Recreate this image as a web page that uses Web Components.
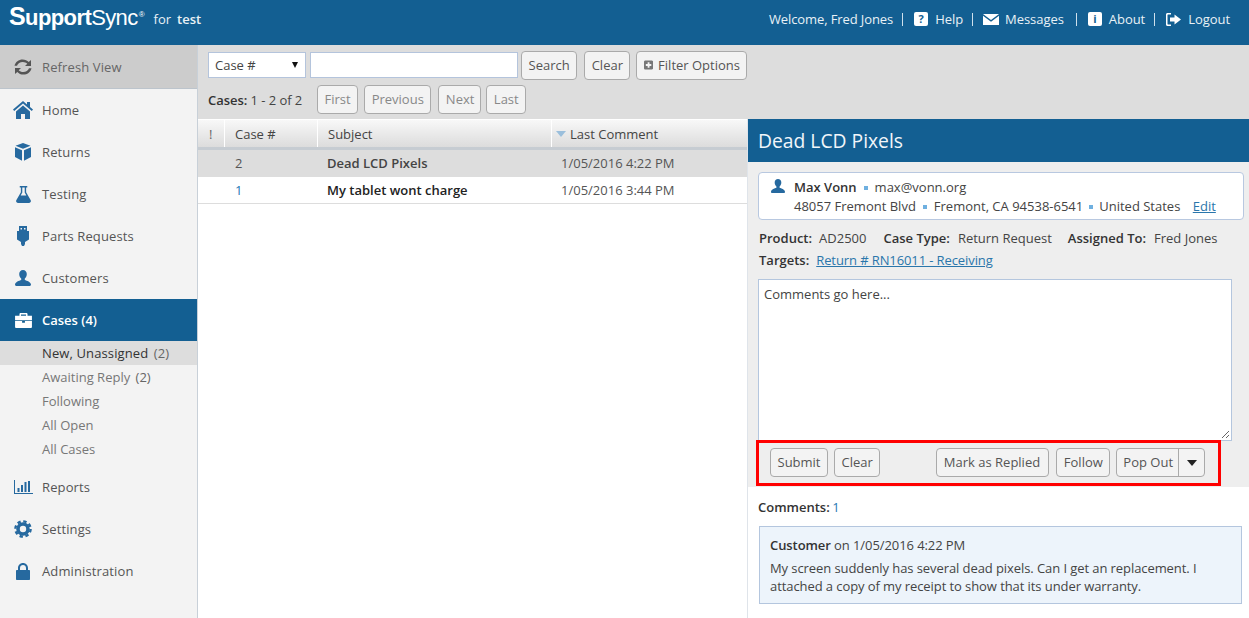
<!DOCTYPE html>
<html><head><meta charset="utf-8"><title>SupportSync</title>
<style>
html,body{margin:0;height:100%;overflow:hidden;background:#fff}
body{font:13px/18px "Open Sans",sans-serif;color:#444}
</style></head><body>
<app-shell>
  <app-header slot="top"></app-header>
  <side-nav slot="side"></side-nav>
  <case-filters slot="tools"></case-filters>
  <case-table slot="list"></case-table>
  <case-detail slot="detail"></case-detail>
</app-shell>
<script>
const I={
refresh:'<svg viewBox="0 0 20 20" width="20" height="20"><path fill="#555" d="M1.500 8.800C2.400 4.700 5.800 2.400 9.600 2.400c2.500 0 4.600 1 6.100 2.600L18 3v6h-6l2.300-2.300c-1.100-1.100-2.700-1.800-4.500-1.800-2.800 0-5 1.600-5.800 3.900zM18.500 11.200c-.9 4.100-4.300 6.400-8.100 6.400-2.500 0-4.600-1-6.100-2.600L2 17v-6h6l-2.300 2.300c1.100 1.100 2.700 1.800 4.500 1.800 2.800 0 5-1.600 5.800-3.900z"/></svg>',
home:'<svg viewBox="0 0 20 18" width="20" height="18"><path fill="#26699f" d="M10 0 0 8.600l1.200 1.400L10 2.500l8.800 7.500L20 8.600l-3-2.600V1h-3v2.400zM3 10.500V18h5v-5h4v5h5v-7.500L10 4.500z"/></svg>',
box:'<svg viewBox="0 0 18 18" width="18" height="18"><path fill="#26699f" d="M9 0 1.500 2.800 9 5.800l7.500-3zM1 4.300V14l7 3.700V7.200zM17 4.300l-7 2.900v10.500l7-3.700z"/></svg>',
flask:'<svg viewBox="0 0 16 18" width="15" height="17"><path fill="#26699f" d="M4 0h8v1.500h-1.200v5L15.700 15c.6 1.300-.1 3-1.900 3H2.200C.4 18-.3 16.300.3 15L5.200 6.500v-5H4zM6.700 1.500v5.400L5 10h6L9.300 6.900V1.500z"/></svg>',
plug:'<svg viewBox="0 0 12 20" width="12" height="20"><path fill="#26699f" d="M2 0h8v5h2v8.500L8 16v2l-1 2H5l-1-2v-2l-4-2.500V5h2zM3.500 2v1.500H5V2zM7 2v1.500h1.500V2z"/></svg>',
user:'<svg viewBox="0 0 16 16" width="16" height="16"><path fill="#26699f" d="M8 0c2.300 0 3.800 1.700 3.800 4 0 1.900-.9 3.700-2 4.600v1.300c1.900.7 6.200 1.900 6.200 4.700 0 .9-.5 1.400-1.200 1.400H1.200C.5 16 0 15.500 0 14.600c0-2.800 4.300-4 6.200-4.700V8.600c-1.100-.9-2-2.700-2-4.600C4.200 1.700 5.700 0 8 0z"/></svg>',
brief:'<svg viewBox="0 0 18 16" width="17" height="15"><path fill="#fff" d="M6 0h6c.8 0 1.300.5 1.300 1.300V3H18v4.600H0V3h4.700V1.300C4.700.5 5.200 0 6 0zm.3 1.500V3h5.400V1.500zM0 8.600h7.500V10.500h3V8.600H18V15c0 .6-.4 1-1 1H1c-.6 0-1-.4-1-1z"/></svg>',
chart:'<svg viewBox="0 0 19 14" width="19" height="14"><path fill="#26699f" d="M0 0h1v13h18v1H0zM3.500 8h2v4h-2zM7 5h2v7H7zM10.500 2h2v10h-2zM14 1h2v11h-2z"/></svg>',
cog:'<svg viewBox="0 0 18 18" width="18" height="18"><circle cx="9" cy="9" r="5" fill="none" stroke="#26699f" stroke-width="3.600"/><circle cx="9" cy="9" r="7.600" fill="none" stroke="#26699f" stroke-width="2.400" stroke-dasharray="3.400 2.570"/></svg>',
lock:'<svg viewBox="0 0 14 17" width="14" height="17"><path fill="#26699f" d="M7 0c2.800 0 5 2.200 5 5v2h1c.6 0 1 .4 1 1v8c0 .6-.4 1-1 1H1c-.6 0-1-.4-1-1V8c0-.6.4-1 1-1h1V5c0-2.800 2.200-5 5-5zm0 2C5.300 2 4 3.300 4 5v2h6V5c0-1.700-1.300-3-3-3z"/></svg>',
envelope:'<svg viewBox="0 0 16 11" width="16" height="11"><path fill="#fff" d="M0 0h16L8 6zM0 1.800 8 7.800l8-6V11H0z"/></svg>',
signout:'<svg viewBox="0 0 15 13" width="15" height="13"><path fill="#fff" d="M1.500 0H5v1.500H2c-.3 0-.5.2-.5.500v9c0 .3.200.5.500.5h3V13H1.500C.7 13 0 12.300 0 11.500v-10C0 .7.700 0 1.500 0zM8.500 1.500l6.500 5-6.500 5V8.500H4v-4h4.500z"/></svg>',
plus:'<svg viewBox="0 0 10 10" width="10" height="10"><path fill="#777" fill-rule="evenodd" d="M1.500 0h7C9.300 0 10 .7 10 1.500v7c0 .8-.7 1.500-1.500 1.500h-7C.7 10 0 9.300 0 8.500v-7C0 .7.7 0 1.500 0zM4 2v2H2v2h2v2h2V6h2V4H6V2z"/></svg>'
};
function def(name,css,html){
  customElements.define(name,class extends HTMLElement{
    connectedCallback(){
      if(this.shadowRoot)return;
      const r=this.attachShadow({mode:'open'});
      const t=document.createElement('template');
      t.innerHTML='<style>'+css+'</style>'+(typeof html==='function'?html(this):html);
      r.appendChild(t.content.cloneNode(true));
    }
  });
}
def('app-shell',`:host{display:grid;grid-template-columns:198px 549px 1fr;grid-template-rows:45px 74px 499px;width:1249px;height:618px;overflow:hidden}
 ::slotted(*){min-width:0}`,
 `<slot name="top"></slot><slot name="side"></slot><slot name="tools"></slot><slot name="list"></slot><slot name="detail"></slot>`);

def('app-header',`:host{display:flex;grid-column:1/4;align-items:center;background:#135f92;color:#e9f1f6;height:45px;padding:0 19px 7px 9px;box-sizing:border-box;line-height:18px}
 .logo{display:flex;align-items:baseline;color:#fff;font-family:"Liberation Sans",sans-serif;font-size:22px;letter-spacing:-.6px;margin-top:-5px}
 .logo b.s{font-size:25px}.logo b{font-weight:700}.logo i{font-style:normal}
 sup{font-size:8px;align-self:flex-start;line-height:10px;margin:3px 0 0 1px;letter-spacing:0}
 .for{margin-left:9px;display:flex;gap:6px}.for b{font-weight:600}
 .r{margin-left:auto;display:flex;align-items:center;letter-spacing:-.05px}
 .sep{width:1px;height:13px;background:#cfe0ec}
 .ic{width:14px;height:14px;background:#fff;color:#135f92;border-radius:2px;font:700 11px/14px "Open Sans",sans-serif;text-align:center;display:block}
 svg{display:block}`,
 `<div class="logo"><b class="s">S</b><b>upport</b><i>Sync</i><sup>®</sup></div>
 <div class="for"><span>for</span><b>test</b></div>
 <div class="r"><span style="letter-spacing:-.1px">Welcome, Fred Jones</span><span class="sep" style="margin:0 11px 0 9px"></span>
 <span class="ic">?</span><span style="margin:0 9px 0 7px">Help</span><span class="sep" style="margin-right:10px"></span>
 ${I.envelope}<span style="margin:0 12px 0 6px">Messages</span><span class="sep" style="margin-right:11px"></span>
 <span class="ic">i</span><span style="margin:0 9px 0 7px">About</span><span class="sep" style="margin-right:11px"></span>
 ${I.signout}<span style="margin-left:7px">Logout</span></div>`);

def('nav-item',`:host{display:flex;align-items:center;height:42px;color:#555;font-weight:500;font-size:13px;letter-spacing:.12px;box-sizing:border-box}
 :host([active]){background:#135f92;color:#fff;font-weight:600;letter-spacing:0}
 :host([refresh]){background:#ccc;height:44px;border-bottom:1px solid #bcc4cc;color:#666}
 .i{width:20px;margin-left:13px;margin-right:9px;display:flex;justify-content:center;align-items:center}
 svg{display:block}`,
 el=>`<span class="i">${I[el.getAttribute('icon')]}</span><slot></slot>`);

def('sub-item',`:host{display:block;height:24px;line-height:24px;padding-left:42px;color:#777;font-size:13px}
 :host([active]){background:#ddd;color:#333;font-weight:500;letter-spacing:.12px}
 ::slotted(span){font-weight:400;color:#666;margin-left:2px}`,`<slot></slot>`);

def('side-nav',`:host{display:flex;flex-direction:column;grid-row:2/4;background:#f3f3f3;border-right:1px solid #c8d0d8;box-sizing:border-box;overflow:hidden}
 .sp{height:5px;flex:none}`,
 `<nav-item refresh icon="refresh">Refresh View</nav-item>
 <nav-item icon="home">Home</nav-item><nav-item icon="box">Returns</nav-item><nav-item icon="flask">Testing</nav-item>
 <nav-item icon="plug">Parts Requests</nav-item><nav-item icon="user">Customers</nav-item>
 <nav-item active icon="brief">Cases&nbsp;(4)</nav-item>
 <sub-item active>New, Unassigned <span>(2)</span></sub-item><sub-item>Awaiting Reply <span>(2)</span></sub-item>
 <sub-item>Following</sub-item><sub-item>All Open</sub-item><sub-item>All Cases</sub-item><div class="sp"></div>
 <nav-item icon="chart">Reports</nav-item><nav-item icon="cog">Settings</nav-item><nav-item icon="lock">Administration</nav-item>`);

def('ui-btn',`:host{display:inline-flex;align-items:center;gap:5px;height:29px;padding:0 6.5px 2px;box-sizing:border-box;border:1px solid #aaa;border-radius:4px;background:#f3f3f3;color:#555;font-size:13px;white-space:nowrap}
 :host([dim]){color:#888}svg{display:block;margin-top:2px}`,`<slot></slot>`);

def('split-btn',`:host{display:inline-flex;height:29px;width:89px;box-sizing:border-box;border:1px solid #aaa;border-radius:4px;background:#f3f3f3;color:#555;align-items:center}
 .a{display:block;box-sizing:border-box;padding:0 0 2px 6px;width:61px;white-space:nowrap;flex:none}.b{flex:1;height:100%;border-left:1px solid #aaa;display:flex;align-items:center;justify-content:center}
 .c{width:0;height:0;border:5px solid transparent;border-top:6px solid #222;border-bottom:0}`,
 `<span class="a"><slot></slot></span><span class="b"><span class="c"></span></span>`);

def('case-filters',`:host{display:block;grid-column:2/4;background:#ddd;padding:6px 10px 0;box-sizing:border-box;height:74px}
 .row{display:flex;align-items:center}.sel{width:98px;height:26px;margin-top:-1px;box-sizing:border-box;border:1px solid #b4c4dc;background:#fff;display:flex;align-items:center;justify-content:space-between;padding:0 7px 0 6px;color:#444}
 .tri{width:0;height:0;border:3.500px solid transparent;border-top:6px solid #111;border-bottom:0}
 .inp{width:208px;height:26px;margin-top:-1px;box-sizing:border-box;border:1px solid #b4c4dc;background:#fff;margin-left:4px;margin-right:3px}
 .pg{margin-top:5px}.lbl{width:109px;color:#444;letter-spacing:-.05px}.lbl b{font-weight:600;color:#333}`,
 `<div class="row"><span class="sel">Case #<span class="tri"></span></span><span class="inp"></span>
 <ui-btn>Search</ui-btn><ui-btn style="margin:0 6px 0 7px">Clear</ui-btn><ui-btn style="width:111px">${I.plus}Filter Options</ui-btn></div>
 <div class="row pg"><span class="lbl"><b>Cases:</b> 1 - 2 of 2</span>
 <ui-btn dim>First</ui-btn><ui-btn dim style="margin:0 7px 0 6px">Previous</ui-btn><ui-btn dim style="margin-right:5px;width:43px">Next</ui-btn><ui-btn dim>Last</ui-btn></div>`);

def('case-table',`:host{display:block;background:#fff;overflow:hidden;color:#555}
 .g{display:grid;grid-template-columns:26px 1px 92px 1px 233px 1px 195px}
 .hc{height:26px;background:linear-gradient(#f8f8f8,#dcdcdc);border-top:1px solid #fff;border-bottom:3px solid #c6ccd2;padding:1px 0 0 10px;color:#444;display:flex;align-items:center;gap:4px}
 .hc.n{padding-left:11px;color:#666}
 .hs{width:1px;background:#fff;border-bottom:3px solid #c6ccd2;height:28px}
 .arrow{width:0;height:0;border:5px solid transparent;border-top:6px solid #9bbfdc;border-bottom:0;margin:0 0 0 -6px}
 .r{display:grid;grid-template-columns:26px 1px 92px 1px 233px 1px 195px;height:27px;line-height:26px}
 .r.on{background:#ddd}.r.b{border-bottom:1px solid #ddd;height:26px;line-height:26px}
 .a{padding-left:10px}.su{padding-left:9px;font-weight:600;color:#222}.on .su{color:#444}.da{padding-left:9px}
 .lk{color:#1f78b4}`,
 `<div class="g"><div class="hc n">!</div><div class="hs"></div><div class="hc">Case #</div><div class="hs"></div><div class="hc">Subject</div><div class="hs"></div><div class="hc"><span class="arrow"></span>Last Comment</div></div>
 <div class="r on"><span></span><span></span><span class="a">2</span><span></span><span class="su">Dead LCD Pixels</span><span></span><span class="da">1/05/2016 4:22 PM</span></div>
 <div class="r b"><span></span><span></span><span class="a lk">1</span><span></span><span class="su">My tablet wont charge</span><span></span><span class="da">1/05/2016 3:44 PM</span></div>`);

def('contact-card',`:host{display:flex;background:#fff;border:1px solid #b8c8e0;border-radius:4px;height:48px;box-sizing:border-box;width:486px;padding:5px 0 0 12px;color:#444;line-height:19px;white-space:nowrap}
 svg{display:block;margin:1px 9px 0 0;width:14px;height:14px;flex:none}
 b{font-weight:600;color:#333}.d{display:inline-block;width:4px;height:4px;background:#6fb0e0;margin:0 7px 2px;vertical-align:middle}
 .d2{margin:0 6px 2px}
 a{color:#2a76ab;text-decoration:underline;margin-left:9px}`,
 `${I.user}<div><div><b>Max Vonn</b><span class="d"></span>max@vonn.org</div><div>48057 Fremont Blvd<span class="d"></span>Fremont, CA 94538-6541<span class="d d2"></span>United States <a>Edit</a></div></div>`);

def('comment-box',`:host{display:block;width:483px;height:78px;box-sizing:border-box;background:#edf4fb;border:1px solid #b4c6de;padding:9px 10px 0 10px;color:#444;line-height:18px;letter-spacing:-.08px}
 b{font-weight:600;color:#333}p{margin:5px 0 0}`,
 `<b>Customer</b> on 1/05/2016 4:22 PM<p>My screen suddenly has several dead pixels. Can I get an replacement. I attached a copy of my receipt to show that its under warranty.</p>`);

def('case-detail',`:host{display:block;background:#fff;border-left:1px solid #dfe4ea;box-sizing:border-box;overflow:hidden}
 h1{margin:0;height:43px;background:#135f92;color:#f1f6fa;font:400 19.3px/43px "Open Sans",sans-serif;padding-left:10px}
 .f{background:#eee;height:325px;padding:10px 10px 0;box-sizing:border-box;position:relative}
 .m{color:#444;display:flex;height:18px;margin-top:9px;padding-left:1px;white-space:pre}.m b{font-weight:600;color:#333}
 .m+.m{margin-top:4px}.m a{color:#2a76ab;text-decoration:underline;margin-left:7px;letter-spacing:-.1px}
 .ta{width:474px;height:162px;box-sizing:border-box;background:#fff;border:1px solid #b4c6de;margin-top:10px;padding:5px;color:#444;position:relative}
 .gr{position:absolute;right:1px;bottom:1px}
 .bs{display:flex;align-items:center;margin-top:7px;padding-left:12px}
 .red{position:absolute;left:8px;top:278px;width:465px;height:46px;box-sizing:border-box;border:3px solid #f00}
 .c{padding:11px 10px 0 10px;color:#333}.c b{font-weight:600}.c span{color:#1f78b4;margin-left:-1px}
 comment-box{margin:10px 0 0 1px}`,
 `<h1>Dead LCD Pixels</h1>
 <div class="f"><contact-card></contact-card>
 <div class="m"><b>Product:</b><span style="margin:0 17px 0 7px">AD2500</span><b>Case Type:</b><span style="margin:0 16px 0 8px">Return Request</span><b>Assigned To:</b><span style="margin-left:8px">Fred Jones</span></div>
 <div class="m"><b>Targets:</b><a>Return # RN16011 - Receiving</a></div>
 <div class="ta">Comments go here...<svg class="gr" width="9" height="9" viewBox="0 0 9 9"><path d="M1 8 8 1M5 8 8 5" stroke="#666" fill="none"/></svg></div>
 <div class="bs"><ui-btn>Submit</ui-btn><ui-btn style="margin-left:6px">Clear</ui-btn><ui-btn style="margin:0 7px 0 56px;width:113px">Mark as Replied</ui-btn><ui-btn style="margin-right:6px">Follow</ui-btn><split-btn>Pop Out</split-btn></div>
 <div class="red"></div></div>
 <div class="c"><b>Comments:</b> <span>1</span><comment-box></comment-box></div>`);
</script>
</body></html>
